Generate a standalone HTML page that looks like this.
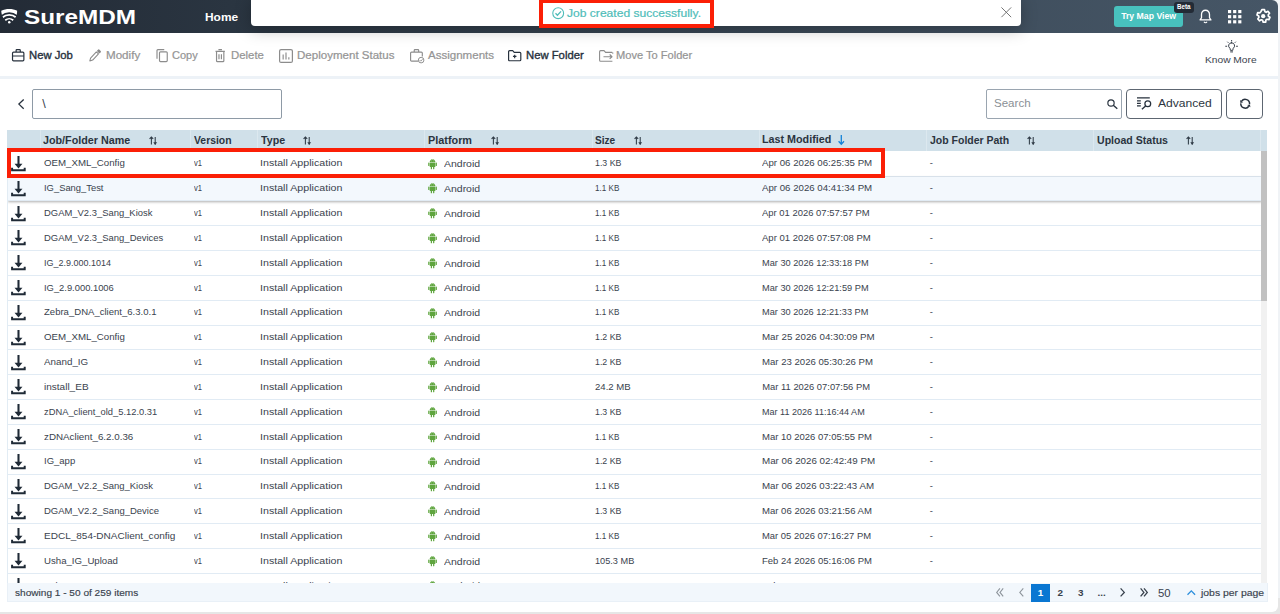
<!DOCTYPE html>
<html lang="en">
<head>
<meta charset="utf-8">
<title>SureMDM - Jobs</title>
<style>
*{box-sizing:border-box;margin:0;padding:0}
html,body{width:1280px;height:614px;overflow:hidden}
body{background:#e6e6e6;font-family:"Liberation Sans",sans-serif;color:#39424d;position:relative}
.strip{position:absolute;left:1270px;top:0;width:10px;height:598px;background:#f0f3f6}
.panel{position:absolute;left:0;top:0;width:1277.5px;height:612.4px;background:#fff;border-radius:0 6px 6px 0;overflow:hidden}
svg{position:absolute;overflow:visible}
.abs{position:absolute;white-space:nowrap;transform-origin:0 50%}

/* header */
.hdr{position:absolute;left:0;top:0;width:1277.5px;height:32.8px;background:linear-gradient(90deg,#232b36 0%,#2a3541 18%,#34414e 45%,#3f4e5d 75%,#465666 100%)}
.brand{left:24px;top:3.6px;font-size:21px;font-weight:700;color:#fff;line-height:26px}
.home{left:205.5px;top:10.8px;font-size:10px;font-weight:700;color:#fff;line-height:14px}
.toast{position:absolute;left:251px;top:-4px;width:769.5px;height:30.2px;background:#fff;border-radius:4px;box-shadow:0 4px 16px rgba(0,0,0,.25)}
.toasttxt{left:567px;top:6.5px;font-size:10.4px;color:#4fbdb9;line-height:14px;-webkit-text-stroke:.2px #4fbdb9}
.redbox{position:absolute;border:4px solid #fb1f06}
.trymap{position:absolute;left:1114.2px;top:5.6px;width:68.8px;height:21px;border-radius:3px;background:#48c1be;color:#fff;font-size:8.7px;font-weight:700;line-height:21px;text-align:center}
.beta{position:absolute;left:1173.5px;top:2.2px;width:20.5px;height:10.4px;border-radius:3px;background:#232b36;color:#fff;font-size:6.3px;font-weight:700;line-height:10.4px;text-align:center}

/* toolbar */
.tb{top:48.4px;font-size:10.7px;line-height:14px;color:#959595;-webkit-text-stroke:.22px #959595}
.tb.on{color:#27313d;font-weight:400;-webkit-text-stroke:.35px #27313d}
.sepband{position:absolute;left:0;top:76px;width:1277.5px;height:3px;background:#edf2f7}
.know{left:1205.5px;top:53.8px;font-size:9.1px;line-height:13px;color:#3b444e}

/* filter row */
.pathbox{position:absolute;left:31.7px;top:89px;width:250px;height:29.6px;border:1px solid #8e9aa6;border-radius:2px;background:#fff}
.pathtxt{left:42.3px;top:96.8px;font-size:12.6px;line-height:15px;color:#39424d}
.search{position:absolute;left:986.3px;top:89px;width:135.7px;height:29.6px;border:1px solid #9aa5b0;border-radius:2px;background:#fff}
.searchtxt{left:994.3px;top:97.4px;font-size:10.3px;line-height:14px;color:#8a8f95}
.btn{position:absolute;top:89px;height:29.6px;border:1px solid #5d6671;border-radius:4px;background:#fff}
.advtxt{left:1157.5px;top:96.9px;font-size:10px;line-height:14px;color:#2d3641}

/* table */
.th{position:absolute;left:7px;top:130px;width:1260.3px;height:21.2px;background:#d0e0e9}
.thsep{position:absolute;top:130px;width:1px;height:21.2px;background:#dce8ef}
.h{top:133.7px;font-size:10px;font-weight:700;line-height:14px;color:#2b343f}
.sort{width:8.6px;height:9.6px;top:136.4px}
.tbody{position:absolute;left:6.5px;top:151.2px;width:1254.5px;height:432px;overflow:hidden;border-left:1px solid #e2ecf4;background:#fff}
.r{position:absolute;left:0;width:1254px;height:24.8px;border-bottom:1px solid #e1ebf4;background:#fff}
.r.hov{background:#f3f8fd;box-shadow:0 1px 2.5px rgba(0,0,0,.32);z-index:2}
.c{position:absolute;top:4.7px;font-size:9.4px;line-height:13px;color:#3a434e;white-space:nowrap;transform-origin:0 50%}
.c1{left:36.3px}.c2{left:186.2px}.c3{left:252.9px}.c4{left:436.4px;top:5.5px}.c5{left:587px}.c6{left:754.8px}.c7{left:922.3px}
.dl{left:3.8px;top:4.2px;width:14.8px;height:15.2px}
.and{left:420.6px;top:6.8px;width:9.1px;height:10.5px}
.sb{position:absolute;left:1261px;top:151.2px;width:6.3px;height:432px;background:#f1f1f1}
.sbt{position:absolute;left:1261px;top:151.2px;width:6.3px;height:150px;background:#c1c1c1}

/* footer */
.ft{position:absolute;left:6.5px;top:583.2px;width:1261px;height:18.6px;background:#f2f7fc;border:1px solid #e9f0f7;border-top:none}
.fttxt{left:14.6px;top:586px;font-size:9.9px;line-height:13px;color:#39424d;-webkit-text-stroke:.15px #39424d}
.pg{top:586px;font-size:9.9px;line-height:13px;color:#39424d;font-weight:700}
.pgcur{position:absolute;left:1031px;top:583.6px;width:18.8px;height:18px;background:#0a77d2;color:#fff;font-size:9.9px;font-weight:700;line-height:18px;text-align:center}
</style>
</head>
<body>
<div class="strip"></div>
<div class="panel">

<!-- ===== header ===== -->
<div class="hdr"></div>
<svg style="left:1px;top:7.8px;width:16.5px;height:16px" viewBox="0 0 33 32">
  <defs><clipPath id="shc"><path d="M0.500 5.500C10 0.500 23 0.500 32.500 5.500C32 17 27 27 16.500 32C6 27 1 17 0.500 5.500Z"/></clipPath></defs>
  <g clip-path="url(#shc)" fill="none" stroke="#fff">
    <path d="M-2 10.500C8 2 25 2 35 10.500" stroke-width="9"/>
    <path d="M3.500 18.500C10.500 12 22.500 12 29.500 18.500" stroke-width="3.600"/>
    <path d="M8.500 24.500C13 20.500 20 20.500 24.500 24.500" stroke-width="3.400"/>
  </g>
  <circle cx="16.500" cy="28.300" r="2.500" fill="#fff"/>
</svg>
<span class="abs brand" style="transform:scaleX(1.157);left:23.6px">SureMDM</span>
<span class="abs home" style="transform:scaleX(1.194);left:205.3px">Home</span>

<div class="toast"></div>
<svg style="left:551.6px;top:7px;width:12.4px;height:12.4px" viewBox="0 0 24 24" fill="none" stroke="#4fbdb9" stroke-width="2.100"><circle cx="12" cy="12" r="10.500"/><path d="M6.800 12.300l3.700 3.600 7-7.400" stroke-width="2.600"/></svg>
<span class="abs toasttxt" style="transform:scaleX(1.162);left:566.9px">Job created successfully.</span>
<svg style="left:1000.5px;top:6.6px;width:10.6px;height:10.6px" viewBox="0 0 10 10" stroke="#6e6e6e" stroke-width=".9" fill="none"><path d="M0.400 .4l9.200 9.200M9.600 .4L.4 9.600"/></svg>
<div class="redbox" style="left:539px;top:-1px;width:175px;height:29.2px"></div>

<div class="trymap">Try Map View</div>
<div class="beta">Beta</div>
<!-- bell -->
<svg style="left:1198.5px;top:9px;width:13px;height:14.5px" viewBox="0 0 26 29" fill="none" stroke="#fff" stroke-width="2.600" stroke-linejoin="round"><path d="M13 2.500c-5 0-8 3.800-8 8.500v6.500l-2.800 4.300h21.600L21 17.500V11c0-4.700-3-8.500-8-8.500z"/><path d="M10 25.500c.7 1.300 1.700 2 3 2s2.300-.7 3-2" stroke-width="2.400"/></svg>
<!-- grid -->
<svg style="left:1227.6px;top:9.5px;width:13.4px;height:13.4px" viewBox="0 0 27 27" fill="#fff"><rect x="0" y="0" width="6.400" height="6.400"/><rect x="10.300" y="0" width="6.400" height="6.400"/><rect x="20.600" y="0" width="6.400" height="6.400"/><rect x="0" y="10.300" width="6.400" height="6.400"/><rect x="10.300" y="10.300" width="6.400" height="6.400"/><rect x="20.600" y="10.300" width="6.400" height="6.400"/><rect x="0" y="20.600" width="6.400" height="6.400"/><rect x="10.300" y="20.600" width="6.400" height="6.400"/><rect x="20.600" y="20.600" width="6.400" height="6.400"/></svg>
<!-- gear -->
<svg style="left:1255.2px;top:8.2px;width:16.4px;height:16.4px" viewBox="0 0 24 24" fill="none" stroke="#fff" stroke-width="2.500" stroke-linejoin="round"><path d="M10.100 2.500h3.800l.6 2.900 1.900.9 2.600-1.500 2.300 2.900-1.900 2.200.2 2.100 2.300 1.600-1.500 3.400-2.900-.5-1.600 1.300-.2 3h-3.700l-.9-2.800-1.900-.8-2.500 1.600-2.600-2.700 1.700-2.400-.4-2-2.500-1.400 1.100-3.600 3 .3 1.500-1.500z"/><circle cx="12" cy="12" r="3.100" fill="#fff" stroke="none"/></svg>

<!-- ===== toolbar ===== -->
<!-- briefcase -->
<svg style="left:11.8px;top:49.3px;width:12.4px;height:12.4px" viewBox="0 0 24 24" fill="none" stroke="#27313d" stroke-width="2.300" stroke-linejoin="round"><rect x="1" y="6" width="22" height="17" rx="2"/><path d="M8 6V2.600c0-.8.500-1.300 1.300-1.300h5.400c.8 0 1.300.5 1.300 1.300V6M1 13.500h22"/></svg>
<span class="abs tb on" style="transform:scaleX(1.055);left:28.8px">New Job</span>
<!-- pencil -->
<svg style="left:88px;top:48px;width:14px;height:15px" viewBox="0 0 14 15"><g transform="translate(1.700 13.100) rotate(-46.500)"><path d="M0.200 0L2.800-1.450H11.200V1.450H2.800Z" fill="none" stroke="#8a8a8a" stroke-width="1.050" stroke-linejoin="round"/><rect x="12.200" y="-1.900" width="2.700" height="3.800" rx=".9" fill="#8a8a8a"/></g></svg>
<span class="abs tb" style="transform:scaleX(1.086);left:105.6px">Modify</span>
<!-- copy -->
<svg style="left:156px;top:48.8px;width:12px;height:13.2px" viewBox="0 0 24 26" fill="none" stroke="#8c8c8c" stroke-width="2.32" stroke-linejoin="round"><rect x="7" y="5.500" width="15.500" height="19.500" rx="2"/><path d="M2 19.500V3c0-1.100.700-1.800 1.800-1.800H16.500"/></svg>
<span class="abs tb" style="transform:scaleX(1.030);left:172.4px">Copy</span>
<!-- trash -->
<svg style="left:214.5px;top:48.8px;width:10.4px;height:13.2px" viewBox="0 0 20 26" fill="none" stroke="#8c8c8c" stroke-width="2.32"><path d="M6.500 1.200h7M0.800 4.800h18.400M2.800 5v18c0 1.200.7 1.900 1.900 1.900h10.600c1.200 0 1.900-.7 1.900-1.900V5M7.600 10.500v9.500M12.400 10.500v9.500"/></svg>
<span class="abs tb" style="transform:scaleX(1.065);left:231.1px">Delete</span>
<!-- deployment status -->
<svg style="left:278.800px;top:48.5px;width:14px;height:14px" viewBox="0 0 28 28" fill="none" stroke="#8c8c8c" stroke-width="2.44"><rect x="1.200" y="1.200" width="25.600" height="25.600" rx="3"/><path d="M8.300 11v9.800M14 6.800v14M19.700 16.500v4.300" stroke-width="2.300"/></svg>
<span class="abs tb" style="transform:scaleX(1.080);left:296.9px">Deployment Status</span>
<!-- assignments -->
<svg style="left:409.5px;top:48.6px;width:14.4px;height:14.4px" viewBox="0 0 29 29" fill="none" stroke="#8c8c8c" stroke-width="2.32" stroke-linejoin="round"><path d="M17 24.500H3.200c-1.200 0-2-.8-2-2V8.200c0-1.200.8-2 2-2h19.600c1.200 0 2 .8 2 2V15"/><path d="M8.500 6V2.800c0-.9.600-1.500 1.500-1.500h6c.9 0 1.500.6 1.500 1.500V6"/><circle cx="22.400" cy="22.400" r="5.600" stroke-width="1.95" fill="#fff"/><path d="M19.600 22.500l2 2 3.600-3.800" stroke-width="1.95"/></svg>
<span class="abs tb" style="transform:scaleX(1.079);left:427.5px">Assignments</span>
<!-- new folder -->
<svg style="left:508px;top:50px;width:13.4px;height:11.6px" viewBox="0 0 27 23" fill="none" stroke="#27313d" stroke-width="2.400" stroke-linejoin="round"><path d="M1.200 19.500V3.200c0-1.200.8-2 2-2h6.300l3 3.300h11.300c1.200 0 2 .8 2 2v13c0 1.200-.8 2-2 2H3.200c-1.200 0-2-.8-2-2z"/><path d="M13.500 9.300v7M10 12.800h7" stroke-width="2.300"/></svg>
<span class="abs tb on" style="transform:scaleX(1.056);left:525.7px">New Folder</span>
<!-- move to folder -->
<svg style="left:598.500px;top:49.600px;width:14.400px;height:12px" viewBox="0 0 29 24" fill="none" stroke="#8c8c8c" stroke-width="2.20" stroke-linejoin="round"><path d="M27 22.500H3.200c-1.200 0-2-.8-2-2V3.200c0-1.200.8-2 2-2h7l3 3.500h13.500M27.700 4.700v3"/><path d="M9 13.500h17M21.500 9l4.700 4.500-4.700 4.500"/></svg>
<span class="abs tb" style="transform:scaleX(1.037);left:616.1px">Move To Folder</span>

<!-- know more -->
<svg style="left:1224.800px;top:40px;width:13.200px;height:13px" viewBox="0 0 26 26" fill="none" stroke="#2d3641" stroke-width="1.900" stroke-linecap="round"><path d="M13 5.500a6 6 0 0 0-3.300 11l1 4.200h4.600l1-4.200A6 6 0 0 0 13 5.500z" stroke-linejoin="round"/><path d="M11 23.800h4M13 .8v1.400M5 4l1 1M21 4l-1 1M1.200 12.500h2M22.800 12.500h2"/></svg>
<span class="abs know" style="transform:scaleX(1.122);left:1205.1px">Know More</span>
<div class="sepband"></div>

<!-- ===== filter row ===== -->
<svg style="left:18.400px;top:99.200px;width:6.200px;height:10.200px" viewBox="0 0 6.200 10.200" fill="none" stroke="#27313d" stroke-width="1.300"><path d="M5.700 .5L.9 5.100l4.800 4.600"/></svg>
<div class="pathbox"></div>
<span class="abs pathtxt">\</span>
<div class="search"></div>
<span class="abs searchtxt" style="transform:scaleX(1.121);left:993.9px">Search</span>
<svg style="left:1106.600px;top:98.500px;width:11px;height:10.200px" viewBox="0 0 22 20.400" fill="none" stroke="#27313d" stroke-width="2.300"><circle cx="8" cy="8" r="6.300"/><path d="M12.600 12.600l8 7" stroke-width="2.700"/></svg>
<div class="btn" style="left:1126px;width:96px"></div>
<svg style="left:1137.200px;top:97px;width:14.200px;height:12.400px" viewBox="0 0 14.200 12.400" fill="none" stroke="#27313d" stroke-width="1.250"><path d="M0 .8h12.800M0 4h3.800M0 6.500h3.800M0 9h3.800"/><circle cx="10.800" cy="6.700" r="2.900"/><path d="M8.600 9L4.900 12.200" stroke-width="1.400"/></svg>
<span class="abs advtxt" style="transform:scaleX(1.209);left:1157.7px">Advanced</span>
<div class="btn" style="left:1226px;width:37.400px"></div>
<svg style="left:1239px;top:98.200px;width:12.400px;height:11.400px" viewBox="0 0 12.400 11.400" fill="none" stroke="#27313d" stroke-width="1.500"><path d="M10.580 6.080A4.400 4.400 0 0 0 2.600 3.180M1.820 5.320A4.400 4.400 0 0 0 9.800 8.220"/><path d="M1.500 4.900L1 2.100L4.200 4.300Z" fill="#27313d" stroke="none"/><path d="M10.900 6.500L11.400 9.300L8.200 7.100Z" fill="#27313d" stroke="none"/></svg>

<!-- ===== table header ===== -->
<div class="th"></div>
<div class="thsep" style="left:39.800px"></div><div class="thsep" style="left:190.200px"></div><div class="thsep" style="left:257.200px"></div><div class="thsep" style="left:424.300px"></div><div class="thsep" style="left:591.500px"></div><div class="thsep" style="left:758.500px"></div><div class="thsep" style="left:925.800px"></div><div class="thsep" style="left:1093px"></div><div class="thsep" style="left:1260.200px"></div>
<span class="abs h" style="transform:scaleX(1.075);left:43.4px">Job/Folder Name</span><span style="position:absolute;left:149px;top:0"><svg class="sort" viewBox="0 0 9 10"><path d="M2.5 9V1.200M0.600 3.100L2.500 1.100L4.400 3.100" stroke="#2f3a46" stroke-width="1.100" fill="none"/><path d="M6.500 1v7.800" stroke="#2f3a46" stroke-width="1.100" fill="none"/><path d="M4.500 6.600h4L6.500 9.300z" fill="#2f3a46"/></svg></span>
<span class="abs h" style="transform:scaleX(1.040);left:194.2px">Version</span>
<span class="abs h" style="transform:scaleX(1.066);left:261px">Type</span><span style="position:absolute;left:303px;top:0"><svg class="sort" viewBox="0 0 9 10"><path d="M2.5 9V1.200M0.600 3.100L2.500 1.100L4.400 3.100" stroke="#2f3a46" stroke-width="1.100" fill="none"/><path d="M6.500 1v7.800" stroke="#2f3a46" stroke-width="1.100" fill="none"/><path d="M4.500 6.600h4L6.500 9.300z" fill="#2f3a46"/></svg></span>
<span class="abs h" style="transform:scaleX(1.085);left:428px">Platform</span><span style="position:absolute;left:490.500px;top:0"><svg class="sort" viewBox="0 0 9 10"><path d="M2.5 9V1.200M0.600 3.100L2.500 1.100L4.400 3.100" stroke="#2f3a46" stroke-width="1.100" fill="none"/><path d="M6.500 1v7.800" stroke="#2f3a46" stroke-width="1.100" fill="none"/><path d="M4.500 6.600h4L6.500 9.300z" fill="#2f3a46"/></svg></span>
<span class="abs h" style="transform:scaleX(1.009);left:595.3px">Size</span><span style="position:absolute;left:633.500px;top:0"><svg class="sort" viewBox="0 0 9 10"><path d="M2.5 9V1.200M0.600 3.100L2.500 1.100L4.400 3.100" stroke="#2f3a46" stroke-width="1.100" fill="none"/><path d="M6.500 1v7.800" stroke="#2f3a46" stroke-width="1.100" fill="none"/><path d="M4.500 6.600h4L6.500 9.300z" fill="#2f3a46"/></svg></span>
<span class="abs h" style="transform:scaleX(1.075);left:762.3px;top:133.200px">Last Modified</span>
<svg style="left:837.500px;top:134.500px;width:6.600px;height:10.200px" viewBox="0 0 6.600 10.200" fill="none" stroke="#1583d8" stroke-width="1.300"><path d="M3.300 0v9M.6 6.300l2.700 2.900 2.700-2.900"/></svg>
<span class="abs h" style="transform:scaleX(1.049);left:929.6px">Job Folder Path</span><span style="position:absolute;left:1027.300px;top:0"><svg class="sort" viewBox="0 0 9 10"><path d="M2.5 9V1.200M0.600 3.100L2.500 1.100L4.400 3.100" stroke="#2f3a46" stroke-width="1.100" fill="none"/><path d="M6.500 1v7.800" stroke="#2f3a46" stroke-width="1.100" fill="none"/><path d="M4.500 6.600h4L6.500 9.300z" fill="#2f3a46"/></svg></span>
<span class="abs h" style="transform:scaleX(1.056);left:1096.7px">Upload Status</span><span style="position:absolute;left:1186px;top:0"><svg class="sort" viewBox="0 0 9 10"><path d="M2.5 9V1.200M0.600 3.100L2.500 1.100L4.400 3.100" stroke="#2f3a46" stroke-width="1.100" fill="none"/><path d="M6.500 1v7.800" stroke="#2f3a46" stroke-width="1.100" fill="none"/><path d="M4.500 6.600h4L6.500 9.300z" fill="#2f3a46"/></svg></span>

<!-- ===== table body ===== -->
<div class="tbody">
<div class="r" style="top:0.60px"><svg class="dl" viewBox="0 0 14.8 15.4"><path d="M7.5 0V9.500" stroke="#1f2a36" stroke-width="2.100" fill="none"/><path d="M3.500 7.900H11.500L7.500 12.600Z" fill="#1f2a36"/><path d="M1 11.800V14.400H13.800V11.800" stroke="#1f2a36" stroke-width="2" fill="none"/></svg><span class="c c1" style="transform:scaleX(1.034)">OEM_XML_Config</span><span class="c c2" style="transform:scaleX(0.808)">v1</span><span class="c c3" style="transform:scaleX(1.137)">Install Application</span><svg class="and" viewBox="0 0 19 22"><g fill="#5fa53e"><path d="M3.6 7.2h11.8v8.400c0 .7-.5 1.200-1.200 1.200h-1v3.400a1.300 1.300 0 0 1-2.600 0v-3.400H8.400v3.400a1.300 1.300 0 0 1-2.600 0v-3.400h-1c-.7 0-1.200-.5-1.200-1.200z"/><rect x="0.4" y="7.2" width="2.6" height="7.6" rx="1.3"/><rect x="16" y="7.2" width="2.6" height="7.6" rx="1.3"/><path d="M3.600 6.400c0-2.400 1.400-4.100 3.300-4.900L5.900 0.100l.5-.3 1.100 1.500c.6-.2 1.300-.3 2-.3s1.400.1 2 .3L12.600-.2l.5.3-1 1.400c1.900.8 3.300 2.500 3.300 4.900z"/></g><circle cx="6.900" cy="4" r=".6" fill="#fff"/><circle cx="12.100" cy="4" r=".6" fill="#fff"/></svg><span class="c c4" style="transform:scaleX(1.117)">Android</span><span class="c c5" style="transform:scaleX(0.938)">1.3 KB</span><span class="c c6" style="transform:scaleX(1.031)">Apr 06 2026 06:25:35 PM</span><span class="c c7">-</span></div>
<div class="r hov" style="top:25.43px"><svg class="dl" viewBox="0 0 14.8 15.4"><path d="M7.5 0V9.500" stroke="#1f2a36" stroke-width="2.100" fill="none"/><path d="M3.500 7.900H11.500L7.500 12.600Z" fill="#1f2a36"/><path d="M1 11.800V14.400H13.800V11.800" stroke="#1f2a36" stroke-width="2" fill="none"/></svg><span class="c c1" style="transform:scaleX(1.001)">IG_Sang_Test</span><span class="c c2" style="transform:scaleX(0.808)">v1</span><span class="c c3" style="transform:scaleX(1.137)">Install Application</span><svg class="and" viewBox="0 0 19 22"><g fill="#5fa53e"><path d="M3.6 7.2h11.8v8.400c0 .7-.5 1.200-1.200 1.200h-1v3.400a1.300 1.300 0 0 1-2.600 0v-3.400H8.400v3.400a1.300 1.300 0 0 1-2.600 0v-3.400h-1c-.7 0-1.200-.5-1.200-1.200z"/><rect x="0.4" y="7.2" width="2.6" height="7.6" rx="1.3"/><rect x="16" y="7.2" width="2.6" height="7.6" rx="1.3"/><path d="M3.600 6.400c0-2.400 1.400-4.100 3.300-4.900L5.900 0.100l.5-.3 1.100 1.500c.6-.2 1.300-.3 2-.3s1.400.1 2 .3L12.600-.2l.5.3-1 1.400c1.900.8 3.300 2.500 3.300 4.900z"/></g><circle cx="6.900" cy="4" r=".6" fill="#fff"/><circle cx="12.100" cy="4" r=".6" fill="#fff"/></svg><span class="c c4" style="transform:scaleX(1.117)">Android</span><span class="c c5" style="transform:scaleX(0.863)">1.1 KB</span><span class="c c6" style="transform:scaleX(1.031)">Apr 06 2026 04:41:34 PM</span><span class="c c7">-</span></div>
<div class="r" style="top:50.26px"><svg class="dl" viewBox="0 0 14.8 15.4"><path d="M7.5 0V9.500" stroke="#1f2a36" stroke-width="2.100" fill="none"/><path d="M3.500 7.900H11.500L7.500 12.600Z" fill="#1f2a36"/><path d="M1 11.800V14.400H13.800V11.800" stroke="#1f2a36" stroke-width="2" fill="none"/></svg><span class="c c1" style="transform:scaleX(1.005)">DGAM_V2.3_Sang_Kiosk</span><span class="c c2" style="transform:scaleX(0.808)">v1</span><span class="c c3" style="transform:scaleX(1.137)">Install Application</span><svg class="and" viewBox="0 0 19 22"><g fill="#5fa53e"><path d="M3.6 7.2h11.8v8.400c0 .7-.5 1.200-1.200 1.200h-1v3.400a1.300 1.300 0 0 1-2.600 0v-3.400H8.400v3.400a1.300 1.300 0 0 1-2.600 0v-3.400h-1c-.7 0-1.200-.5-1.200-1.200z"/><rect x="0.4" y="7.2" width="2.6" height="7.6" rx="1.3"/><rect x="16" y="7.2" width="2.6" height="7.6" rx="1.3"/><path d="M3.600 6.400c0-2.400 1.400-4.100 3.300-4.900L5.900 0.100l.5-.3 1.100 1.500c.6-.2 1.300-.3 2-.3s1.400.1 2 .3L12.600-.2l.5.3-1 1.400c1.900.8 3.300 2.500 3.300 4.900z"/></g><circle cx="6.900" cy="4" r=".6" fill="#fff"/><circle cx="12.100" cy="4" r=".6" fill="#fff"/></svg><span class="c c4" style="transform:scaleX(1.117)">Android</span><span class="c c5" style="transform:scaleX(0.863)">1.1 KB</span><span class="c c6" style="transform:scaleX(1.008)">Apr 01 2026 07:57:57 PM</span><span class="c c7">-</span></div>
<div class="r" style="top:75.09px"><svg class="dl" viewBox="0 0 14.8 15.4"><path d="M7.5 0V9.500" stroke="#1f2a36" stroke-width="2.100" fill="none"/><path d="M3.500 7.900H11.500L7.500 12.600Z" fill="#1f2a36"/><path d="M1 11.800V14.400H13.800V11.800" stroke="#1f2a36" stroke-width="2" fill="none"/></svg><span class="c c1" style="transform:scaleX(1.008)">DGAM_V2.3_Sang_Devices</span><span class="c c2" style="transform:scaleX(0.808)">v1</span><span class="c c3" style="transform:scaleX(1.137)">Install Application</span><svg class="and" viewBox="0 0 19 22"><g fill="#5fa53e"><path d="M3.6 7.2h11.8v8.400c0 .7-.5 1.200-1.200 1.200h-1v3.400a1.300 1.300 0 0 1-2.600 0v-3.400H8.400v3.400a1.300 1.300 0 0 1-2.600 0v-3.400h-1c-.7 0-1.200-.5-1.200-1.200z"/><rect x="0.4" y="7.2" width="2.6" height="7.6" rx="1.3"/><rect x="16" y="7.2" width="2.6" height="7.6" rx="1.3"/><path d="M3.600 6.400c0-2.400 1.400-4.100 3.300-4.900L5.900 0.100l.5-.3 1.100 1.500c.6-.2 1.300-.3 2-.3s1.400.1 2 .3L12.600-.2l.5.3-1 1.400c1.900.8 3.300 2.500 3.300 4.900z"/></g><circle cx="6.900" cy="4" r=".6" fill="#fff"/><circle cx="12.100" cy="4" r=".6" fill="#fff"/></svg><span class="c c4" style="transform:scaleX(1.117)">Android</span><span class="c c5" style="transform:scaleX(0.863)">1.1 KB</span><span class="c c6" style="transform:scaleX(1.018)">Apr 01 2026 07:57:08 PM</span><span class="c c7">-</span></div>
<div class="r" style="top:99.92px"><svg class="dl" viewBox="0 0 14.8 15.4"><path d="M7.5 0V9.500" stroke="#1f2a36" stroke-width="2.100" fill="none"/><path d="M3.500 7.900H11.500L7.500 12.600Z" fill="#1f2a36"/><path d="M1 11.800V14.400H13.800V11.800" stroke="#1f2a36" stroke-width="2" fill="none"/></svg><span class="c c1" style="transform:scaleX(0.958)">IG_2.9.000.1014</span><span class="c c2" style="transform:scaleX(0.808)">v1</span><span class="c c3" style="transform:scaleX(1.137)">Install Application</span><svg class="and" viewBox="0 0 19 22"><g fill="#5fa53e"><path d="M3.6 7.2h11.8v8.400c0 .7-.5 1.200-1.200 1.200h-1v3.400a1.300 1.300 0 0 1-2.600 0v-3.400H8.400v3.400a1.300 1.300 0 0 1-2.600 0v-3.400h-1c-.7 0-1.200-.5-1.200-1.200z"/><rect x="0.4" y="7.2" width="2.6" height="7.6" rx="1.3"/><rect x="16" y="7.2" width="2.6" height="7.6" rx="1.3"/><path d="M3.600 6.400c0-2.400 1.400-4.100 3.300-4.900L5.900 0.100l.5-.3 1.100 1.500c.6-.2 1.300-.3 2-.3s1.400.1 2 .3L12.600-.2l.5.3-1 1.400c1.900.8 3.300 2.500 3.300 4.900z"/></g><circle cx="6.900" cy="4" r=".6" fill="#fff"/><circle cx="12.100" cy="4" r=".6" fill="#fff"/></svg><span class="c c4" style="transform:scaleX(1.117)">Android</span><span class="c c5" style="transform:scaleX(0.863)">1.1 KB</span><span class="c c6" style="transform:scaleX(0.983)">Mar 30 2026 12:33:18 PM</span><span class="c c7">-</span></div>
<div class="r" style="top:124.75px"><svg class="dl" viewBox="0 0 14.8 15.4"><path d="M7.5 0V9.500" stroke="#1f2a36" stroke-width="2.100" fill="none"/><path d="M3.500 7.900H11.500L7.500 12.600Z" fill="#1f2a36"/><path d="M1 11.800V14.400H13.800V11.800" stroke="#1f2a36" stroke-width="2" fill="none"/></svg><span class="c c1" style="transform:scaleX(0.999)">IG_2.9.000.1006</span><span class="c c2" style="transform:scaleX(0.808)">v1</span><span class="c c3" style="transform:scaleX(1.137)">Install Application</span><svg class="and" viewBox="0 0 19 22"><g fill="#5fa53e"><path d="M3.6 7.2h11.8v8.400c0 .7-.5 1.200-1.200 1.200h-1v3.400a1.300 1.300 0 0 1-2.600 0v-3.400H8.400v3.400a1.300 1.300 0 0 1-2.600 0v-3.400h-1c-.7 0-1.200-.5-1.200-1.200z"/><rect x="0.4" y="7.2" width="2.6" height="7.6" rx="1.3"/><rect x="16" y="7.2" width="2.6" height="7.6" rx="1.3"/><path d="M3.600 6.400c0-2.400 1.400-4.100 3.300-4.900L5.900 0.100l.5-.3 1.100 1.500c.6-.2 1.300-.3 2-.3s1.400.1 2 .3L12.600-.2l.5.3-1 1.400c1.900.8 3.300 2.500 3.300 4.900z"/></g><circle cx="6.900" cy="4" r=".6" fill="#fff"/><circle cx="12.100" cy="4" r=".6" fill="#fff"/></svg><span class="c c4" style="transform:scaleX(1.117)">Android</span><span class="c c5" style="transform:scaleX(0.863)">1.1 KB</span><span class="c c6" style="transform:scaleX(0.983)">Mar 30 2026 12:21:59 PM</span><span class="c c7">-</span></div>
<div class="r" style="top:149.58px"><svg class="dl" viewBox="0 0 14.8 15.4"><path d="M7.5 0V9.500" stroke="#1f2a36" stroke-width="2.100" fill="none"/><path d="M3.500 7.900H11.500L7.500 12.600Z" fill="#1f2a36"/><path d="M1 11.800V14.400H13.800V11.800" stroke="#1f2a36" stroke-width="2" fill="none"/></svg><span class="c c1" style="transform:scaleX(1.018)">Zebra_DNA_client_6.3.0.1</span><span class="c c2" style="transform:scaleX(0.808)">v1</span><span class="c c3" style="transform:scaleX(1.137)">Install Application</span><svg class="and" viewBox="0 0 19 22"><g fill="#5fa53e"><path d="M3.6 7.2h11.8v8.400c0 .7-.5 1.200-1.200 1.200h-1v3.400a1.300 1.300 0 0 1-2.600 0v-3.400H8.400v3.400a1.300 1.300 0 0 1-2.600 0v-3.400h-1c-.7 0-1.200-.5-1.200-1.200z"/><rect x="0.4" y="7.2" width="2.6" height="7.6" rx="1.3"/><rect x="16" y="7.2" width="2.6" height="7.6" rx="1.3"/><path d="M3.600 6.400c0-2.400 1.400-4.100 3.300-4.900L5.900 0.100l.5-.3 1.100 1.500c.6-.2 1.300-.3 2-.3s1.400.1 2 .3L12.600-.2l.5.3-1 1.400c1.900.8 3.300 2.500 3.300 4.900z"/></g><circle cx="6.900" cy="4" r=".6" fill="#fff"/><circle cx="12.100" cy="4" r=".6" fill="#fff"/></svg><span class="c c4" style="transform:scaleX(1.117)">Android</span><span class="c c5" style="transform:scaleX(0.863)">1.1 KB</span><span class="c c6" style="transform:scaleX(0.981)">Mar 30 2026 12:21:33 PM</span><span class="c c7">-</span></div>
<div class="r" style="top:174.41px"><svg class="dl" viewBox="0 0 14.8 15.4"><path d="M7.5 0V9.500" stroke="#1f2a36" stroke-width="2.100" fill="none"/><path d="M3.500 7.900H11.500L7.500 12.600Z" fill="#1f2a36"/><path d="M1 11.800V14.400H13.800V11.800" stroke="#1f2a36" stroke-width="2" fill="none"/></svg><span class="c c1" style="transform:scaleX(1.034)">OEM_XML_Config</span><span class="c c2" style="transform:scaleX(0.808)">v1</span><span class="c c3" style="transform:scaleX(1.137)">Install Application</span><svg class="and" viewBox="0 0 19 22"><g fill="#5fa53e"><path d="M3.6 7.2h11.8v8.400c0 .7-.5 1.200-1.200 1.200h-1v3.400a1.300 1.300 0 0 1-2.600 0v-3.400H8.400v3.400a1.300 1.300 0 0 1-2.600 0v-3.400h-1c-.7 0-1.200-.5-1.200-1.200z"/><rect x="0.4" y="7.2" width="2.6" height="7.6" rx="1.3"/><rect x="16" y="7.2" width="2.6" height="7.6" rx="1.3"/><path d="M3.600 6.400c0-2.400 1.400-4.100 3.300-4.900L5.900 0.100l.5-.3 1.100 1.500c.6-.2 1.300-.3 2-.3s1.400.1 2 .3L12.600-.2l.5.3-1 1.400c1.900.8 3.300 2.500 3.300 4.900z"/></g><circle cx="6.900" cy="4" r=".6" fill="#fff"/><circle cx="12.100" cy="4" r=".6" fill="#fff"/></svg><span class="c c4" style="transform:scaleX(1.117)">Android</span><span class="c c5" style="transform:scaleX(0.938)">1.2 KB</span><span class="c c6" style="transform:scaleX(1.040)">Mar 25 2026 04:30:09 PM</span><span class="c c7">-</span></div>
<div class="r" style="top:199.24px"><svg class="dl" viewBox="0 0 14.8 15.4"><path d="M7.5 0V9.500" stroke="#1f2a36" stroke-width="2.100" fill="none"/><path d="M3.500 7.900H11.500L7.500 12.600Z" fill="#1f2a36"/><path d="M1 11.800V14.400H13.800V11.800" stroke="#1f2a36" stroke-width="2" fill="none"/></svg><span class="c c1" style="transform:scaleX(1.047)">Anand_IG</span><span class="c c2" style="transform:scaleX(0.808)">v1</span><span class="c c3" style="transform:scaleX(1.137)">Install Application</span><svg class="and" viewBox="0 0 19 22"><g fill="#5fa53e"><path d="M3.6 7.2h11.8v8.400c0 .7-.5 1.200-1.200 1.200h-1v3.400a1.300 1.300 0 0 1-2.600 0v-3.400H8.400v3.400a1.300 1.300 0 0 1-2.600 0v-3.400h-1c-.7 0-1.200-.5-1.200-1.200z"/><rect x="0.4" y="7.2" width="2.6" height="7.6" rx="1.3"/><rect x="16" y="7.2" width="2.6" height="7.6" rx="1.3"/><path d="M3.600 6.400c0-2.400 1.400-4.100 3.300-4.900L5.900 0.100l.5-.3 1.100 1.500c.6-.2 1.300-.3 2-.3s1.400.1 2 .3L12.600-.2l.5.3-1 1.400c1.900.8 3.300 2.500 3.300 4.900z"/></g><circle cx="6.900" cy="4" r=".6" fill="#fff"/><circle cx="12.100" cy="4" r=".6" fill="#fff"/></svg><span class="c c4" style="transform:scaleX(1.117)">Android</span><span class="c c5" style="transform:scaleX(0.938)">1.2 KB</span><span class="c c6" style="transform:scaleX(1.023)">Mar 23 2026 05:30:26 PM</span><span class="c c7">-</span></div>
<div class="r" style="top:224.07px"><svg class="dl" viewBox="0 0 14.8 15.4"><path d="M7.5 0V9.500" stroke="#1f2a36" stroke-width="2.100" fill="none"/><path d="M3.500 7.900H11.500L7.500 12.600Z" fill="#1f2a36"/><path d="M1 11.800V14.400H13.800V11.800" stroke="#1f2a36" stroke-width="2" fill="none"/></svg><span class="c c1" style="transform:scaleX(1.069)">install_EB</span><span class="c c2" style="transform:scaleX(0.808)">v1</span><span class="c c3" style="transform:scaleX(1.137)">Install Application</span><svg class="and" viewBox="0 0 19 22"><g fill="#5fa53e"><path d="M3.6 7.2h11.8v8.400c0 .7-.5 1.200-1.200 1.200h-1v3.400a1.300 1.300 0 0 1-2.600 0v-3.400H8.400v3.400a1.300 1.300 0 0 1-2.600 0v-3.400h-1c-.7 0-1.200-.5-1.200-1.200z"/><rect x="0.4" y="7.2" width="2.6" height="7.6" rx="1.3"/><rect x="16" y="7.2" width="2.6" height="7.6" rx="1.3"/><path d="M3.600 6.400c0-2.400 1.400-4.100 3.300-4.900L5.900 0.100l.5-.3 1.100 1.500c.6-.2 1.300-.3 2-.3s1.400.1 2 .3L12.600-.2l.5.3-1 1.400c1.900.8 3.300 2.500 3.300 4.900z"/></g><circle cx="6.900" cy="4" r=".6" fill="#fff"/><circle cx="12.100" cy="4" r=".6" fill="#fff"/></svg><span class="c c4" style="transform:scaleX(1.117)">Android</span><span class="c c5" style="transform:scaleX(1.022)">24.2 MB</span><span class="c c6" style="transform:scaleX(1.000)">Mar 11 2026 07:07:56 PM</span><span class="c c7">-</span></div>
<div class="r" style="top:248.90px"><svg class="dl" viewBox="0 0 14.8 15.4"><path d="M7.5 0V9.500" stroke="#1f2a36" stroke-width="2.100" fill="none"/><path d="M3.500 7.900H11.500L7.500 12.600Z" fill="#1f2a36"/><path d="M1 11.800V14.400H13.800V11.800" stroke="#1f2a36" stroke-width="2" fill="none"/></svg><span class="c c1" style="transform:scaleX(0.996)">zDNA_client_old_5.12.0.31</span><span class="c c2" style="transform:scaleX(0.808)">v1</span><span class="c c3" style="transform:scaleX(1.137)">Install Application</span><svg class="and" viewBox="0 0 19 22"><g fill="#5fa53e"><path d="M3.6 7.2h11.8v8.400c0 .7-.5 1.200-1.200 1.200h-1v3.400a1.300 1.300 0 0 1-2.600 0v-3.400H8.400v3.400a1.300 1.300 0 0 1-2.600 0v-3.400h-1c-.7 0-1.200-.5-1.200-1.200z"/><rect x="0.4" y="7.2" width="2.6" height="7.6" rx="1.3"/><rect x="16" y="7.2" width="2.6" height="7.6" rx="1.3"/><path d="M3.600 6.400c0-2.400 1.400-4.100 3.300-4.900L5.900 0.100l.5-.3 1.100 1.500c.6-.2 1.300-.3 2-.3s1.400.1 2 .3L12.600-.2l.5.3-1 1.400c1.900.8 3.300 2.500 3.300 4.900z"/></g><circle cx="6.900" cy="4" r=".6" fill="#fff"/><circle cx="12.100" cy="4" r=".6" fill="#fff"/></svg><span class="c c4" style="transform:scaleX(1.117)">Android</span><span class="c c5" style="transform:scaleX(0.938)">1.3 KB</span><span class="c c6" style="transform:scaleX(0.964)">Mar 11 2026 11:16:44 AM</span><span class="c c7">-</span></div>
<div class="r" style="top:273.73px"><svg class="dl" viewBox="0 0 14.8 15.4"><path d="M7.5 0V9.500" stroke="#1f2a36" stroke-width="2.100" fill="none"/><path d="M3.500 7.900H11.500L7.500 12.600Z" fill="#1f2a36"/><path d="M1 11.800V14.400H13.800V11.800" stroke="#1f2a36" stroke-width="2" fill="none"/></svg><span class="c c1" style="transform:scaleX(1.045)">zDNAclient_6.2.0.36</span><span class="c c2" style="transform:scaleX(0.808)">v1</span><span class="c c3" style="transform:scaleX(1.137)">Install Application</span><svg class="and" viewBox="0 0 19 22"><g fill="#5fa53e"><path d="M3.6 7.2h11.8v8.400c0 .7-.5 1.200-1.200 1.200h-1v3.400a1.300 1.300 0 0 1-2.600 0v-3.400H8.400v3.400a1.300 1.300 0 0 1-2.600 0v-3.400h-1c-.7 0-1.200-.5-1.200-1.200z"/><rect x="0.4" y="7.2" width="2.6" height="7.6" rx="1.3"/><rect x="16" y="7.2" width="2.6" height="7.6" rx="1.3"/><path d="M3.600 6.400c0-2.400 1.400-4.100 3.300-4.900L5.900 0.100l.5-.3 1.100 1.500c.6-.2 1.300-.3 2-.3s1.400.1 2 .3L12.600-.2l.5.3-1 1.400c1.900.8 3.300 2.500 3.300 4.900z"/></g><circle cx="6.900" cy="4" r=".6" fill="#fff"/><circle cx="12.100" cy="4" r=".6" fill="#fff"/></svg><span class="c c4" style="transform:scaleX(1.117)">Android</span><span class="c c5" style="transform:scaleX(0.863)">1.1 KB</span><span class="c c6" style="transform:scaleX(1.014)">Mar 10 2026 07:05:55 PM</span><span class="c c7">-</span></div>
<div class="r" style="top:298.56px"><svg class="dl" viewBox="0 0 14.8 15.4"><path d="M7.5 0V9.500" stroke="#1f2a36" stroke-width="2.100" fill="none"/><path d="M3.500 7.900H11.500L7.500 12.600Z" fill="#1f2a36"/><path d="M1 11.800V14.400H13.800V11.800" stroke="#1f2a36" stroke-width="2" fill="none"/></svg><span class="c c1" style="transform:scaleX(1.014)">IG_app</span><span class="c c2" style="transform:scaleX(0.808)">v1</span><span class="c c3" style="transform:scaleX(1.137)">Install Application</span><svg class="and" viewBox="0 0 19 22"><g fill="#5fa53e"><path d="M3.6 7.2h11.8v8.400c0 .7-.5 1.200-1.200 1.200h-1v3.400a1.300 1.300 0 0 1-2.600 0v-3.400H8.400v3.400a1.300 1.300 0 0 1-2.600 0v-3.400h-1c-.7 0-1.200-.5-1.200-1.200z"/><rect x="0.4" y="7.2" width="2.6" height="7.6" rx="1.3"/><rect x="16" y="7.2" width="2.6" height="7.6" rx="1.3"/><path d="M3.600 6.400c0-2.400 1.400-4.100 3.300-4.900L5.900 0.100l.5-.3 1.100 1.500c.6-.2 1.300-.3 2-.3s1.400.1 2 .3L12.600-.2l.5.3-1 1.400c1.900.8 3.300 2.500 3.300 4.900z"/></g><circle cx="6.900" cy="4" r=".6" fill="#fff"/><circle cx="12.100" cy="4" r=".6" fill="#fff"/></svg><span class="c c4" style="transform:scaleX(1.117)">Android</span><span class="c c5" style="transform:scaleX(0.938)">1.2 KB</span><span class="c c6" style="transform:scaleX(1.043)">Mar 06 2026 02:42:49 PM</span><span class="c c7">-</span></div>
<div class="r" style="top:323.39px"><svg class="dl" viewBox="0 0 14.8 15.4"><path d="M7.5 0V9.500" stroke="#1f2a36" stroke-width="2.100" fill="none"/><path d="M3.500 7.900H11.500L7.500 12.600Z" fill="#1f2a36"/><path d="M1 11.800V14.400H13.800V11.800" stroke="#1f2a36" stroke-width="2" fill="none"/></svg><span class="c c1" style="transform:scaleX(1.010)">DGAM_V2.2_Sang_Kiosk</span><span class="c c2" style="transform:scaleX(0.808)">v1</span><span class="c c3" style="transform:scaleX(1.137)">Install Application</span><svg class="and" viewBox="0 0 19 22"><g fill="#5fa53e"><path d="M3.6 7.2h11.8v8.400c0 .7-.5 1.200-1.200 1.200h-1v3.400a1.300 1.300 0 0 1-2.600 0v-3.400H8.400v3.400a1.300 1.300 0 0 1-2.600 0v-3.400h-1c-.7 0-1.200-.5-1.200-1.200z"/><rect x="0.4" y="7.2" width="2.6" height="7.6" rx="1.3"/><rect x="16" y="7.2" width="2.6" height="7.6" rx="1.3"/><path d="M3.600 6.400c0-2.400 1.400-4.100 3.300-4.900L5.900 0.100l.5-.3 1.100 1.500c.6-.2 1.300-.3 2-.3s1.400.1 2 .3L12.600-.2l.5.3-1 1.400c1.900.8 3.300 2.500 3.300 4.900z"/></g><circle cx="6.900" cy="4" r=".6" fill="#fff"/><circle cx="12.100" cy="4" r=".6" fill="#fff"/></svg><span class="c c4" style="transform:scaleX(1.117)">Android</span><span class="c c5" style="transform:scaleX(0.863)">1.1 KB</span><span class="c c6" style="transform:scaleX(1.038)">Mar 06 2026 03:22:43 AM</span><span class="c c7">-</span></div>
<div class="r" style="top:348.22px"><svg class="dl" viewBox="0 0 14.8 15.4"><path d="M7.5 0V9.500" stroke="#1f2a36" stroke-width="2.100" fill="none"/><path d="M3.500 7.900H11.500L7.500 12.600Z" fill="#1f2a36"/><path d="M1 11.800V14.400H13.800V11.800" stroke="#1f2a36" stroke-width="2" fill="none"/></svg><span class="c c1" style="transform:scaleX(1.012)">DGAM_V2.2_Sang_Device</span><span class="c c2" style="transform:scaleX(0.808)">v1</span><span class="c c3" style="transform:scaleX(1.137)">Install Application</span><svg class="and" viewBox="0 0 19 22"><g fill="#5fa53e"><path d="M3.6 7.2h11.8v8.400c0 .7-.5 1.200-1.200 1.200h-1v3.400a1.300 1.300 0 0 1-2.600 0v-3.400H8.400v3.400a1.300 1.300 0 0 1-2.600 0v-3.400h-1c-.7 0-1.200-.5-1.200-1.200z"/><rect x="0.4" y="7.2" width="2.6" height="7.6" rx="1.3"/><rect x="16" y="7.2" width="2.6" height="7.6" rx="1.3"/><path d="M3.600 6.400c0-2.400 1.400-4.100 3.300-4.900L5.900 0.100l.5-.3 1.100 1.500c.6-.2 1.300-.3 2-.3s1.400.1 2 .3L12.600-.2l.5.3-1 1.400c1.900.8 3.300 2.500 3.300 4.900z"/></g><circle cx="6.900" cy="4" r=".6" fill="#fff"/><circle cx="12.100" cy="4" r=".6" fill="#fff"/></svg><span class="c c4" style="transform:scaleX(1.117)">Android</span><span class="c c5" style="transform:scaleX(0.938)">1.3 KB</span><span class="c c6" style="transform:scaleX(1.019)">Mar 06 2026 03:21:56 AM</span><span class="c c7">-</span></div>
<div class="r" style="top:373.05px"><svg class="dl" viewBox="0 0 14.8 15.4"><path d="M7.5 0V9.500" stroke="#1f2a36" stroke-width="2.100" fill="none"/><path d="M3.500 7.900H11.500L7.500 12.600Z" fill="#1f2a36"/><path d="M1 11.800V14.400H13.800V11.800" stroke="#1f2a36" stroke-width="2" fill="none"/></svg><span class="c c1" style="transform:scaleX(1.068)">EDCL_854-DNAClient_config</span><span class="c c2" style="transform:scaleX(0.808)">v1</span><span class="c c3" style="transform:scaleX(1.137)">Install Application</span><svg class="and" viewBox="0 0 19 22"><g fill="#5fa53e"><path d="M3.6 7.2h11.8v8.400c0 .7-.5 1.200-1.200 1.200h-1v3.400a1.300 1.300 0 0 1-2.600 0v-3.400H8.400v3.400a1.300 1.300 0 0 1-2.600 0v-3.400h-1c-.7 0-1.200-.5-1.200-1.200z"/><rect x="0.4" y="7.2" width="2.6" height="7.6" rx="1.3"/><rect x="16" y="7.2" width="2.6" height="7.6" rx="1.3"/><path d="M3.600 6.400c0-2.400 1.400-4.100 3.300-4.900L5.900 0.100l.5-.3 1.100 1.500c.6-.2 1.300-.3 2-.3s1.400.1 2 .3L12.600-.2l.5.3-1 1.400c1.900.8 3.300 2.500 3.300 4.900z"/></g><circle cx="6.900" cy="4" r=".6" fill="#fff"/><circle cx="12.100" cy="4" r=".6" fill="#fff"/></svg><span class="c c4" style="transform:scaleX(1.117)">Android</span><span class="c c5" style="transform:scaleX(0.863)">1.1 KB</span><span class="c c6" style="transform:scaleX(1.006)">Mar 05 2026 07:16:27 PM</span><span class="c c7">-</span></div>
<div class="r" style="top:397.88px"><svg class="dl" viewBox="0 0 14.8 15.4"><path d="M7.5 0V9.500" stroke="#1f2a36" stroke-width="2.100" fill="none"/><path d="M3.500 7.900H11.500L7.500 12.600Z" fill="#1f2a36"/><path d="M1 11.800V14.400H13.800V11.800" stroke="#1f2a36" stroke-width="2" fill="none"/></svg><span class="c c1" style="transform:scaleX(1.028)">Usha_IG_Upload</span><span class="c c2" style="transform:scaleX(0.808)">v1</span><span class="c c3" style="transform:scaleX(1.137)">Install Application</span><svg class="and" viewBox="0 0 19 22"><g fill="#5fa53e"><path d="M3.6 7.2h11.8v8.400c0 .7-.5 1.200-1.200 1.200h-1v3.400a1.300 1.300 0 0 1-2.600 0v-3.400H8.400v3.400a1.300 1.300 0 0 1-2.600 0v-3.400h-1c-.7 0-1.200-.5-1.200-1.200z"/><rect x="0.4" y="7.2" width="2.6" height="7.6" rx="1.3"/><rect x="16" y="7.2" width="2.6" height="7.6" rx="1.3"/><path d="M3.600 6.400c0-2.400 1.400-4.100 3.300-4.900L5.900 0.100l.5-.3 1.100 1.500c.6-.2 1.300-.3 2-.3s1.400.1 2 .3L12.600-.2l.5.3-1 1.400c1.900.8 3.300 2.500 3.300 4.900z"/></g><circle cx="6.900" cy="4" r=".6" fill="#fff"/><circle cx="12.100" cy="4" r=".6" fill="#fff"/></svg><span class="c c4" style="transform:scaleX(1.117)">Android</span><span class="c c5" style="transform:scaleX(0.979)">105.3 MB</span><span class="c c6" style="transform:scaleX(1.014)">Feb 24 2026 05:16:06 PM</span><span class="c c7">-</span></div>
<div class="r" style="top:422.71px"><svg class="dl" viewBox="0 0 14.8 15.4"><path d="M7.5 0V9.500" stroke="#1f2a36" stroke-width="2.100" fill="none"/><path d="M3.500 7.900H11.500L7.500 12.600Z" fill="#1f2a36"/><path d="M1 11.800V14.400H13.800V11.800" stroke="#1f2a36" stroke-width="2" fill="none"/></svg><span class="c c1" style="transform:scaleX(0.993)">Usha_EB W</span><span class="c c2" style="transform:scaleX(0.808)">v1</span><span class="c c3" style="transform:scaleX(1.137)">Install Application</span><svg class="and" viewBox="0 0 19 22"><g fill="#5fa53e"><path d="M3.6 7.2h11.8v8.400c0 .7-.5 1.200-1.200 1.200h-1v3.400a1.300 1.300 0 0 1-2.600 0v-3.400H8.400v3.400a1.300 1.300 0 0 1-2.600 0v-3.400h-1c-.7 0-1.200-.5-1.200-1.200z"/><rect x="0.4" y="7.2" width="2.6" height="7.6" rx="1.3"/><rect x="16" y="7.2" width="2.6" height="7.6" rx="1.3"/><path d="M3.600 6.400c0-2.400 1.400-4.100 3.300-4.900L5.900 0.100l.5-.3 1.100 1.500c.6-.2 1.300-.3 2-.3s1.400.1 2 .3L12.600-.2l.5.3-1 1.400c1.900.8 3.300 2.500 3.300 4.900z"/></g><circle cx="6.900" cy="4" r=".6" fill="#fff"/><circle cx="12.100" cy="4" r=".6" fill="#fff"/></svg><span class="c c4" style="transform:scaleX(1.117)">Android</span><span class="c c5" style="transform:scaleX(0.938)">1.3 KB</span><span class="c c6" style="transform:scaleX(1.039)">Feb 24 2026 05:08:45 PM</span><span class="c c7">-</span></div>
</div>
<div class="sb"></div><div class="sbt"></div>
<div class="redbox" style="left:7px;top:148px;width:878px;height:30px;z-index:5"></div>

<!-- ===== footer ===== -->
<div class="ft"></div>
<span class="abs fttxt" style="transform:scaleX(1.021);left:14.6px">showing 1 - 50 of 259 items</span>
<svg style="left:996px;top:588.300px;width:7.600px;height:8.800px" viewBox="0 0 7.600 8.800" fill="none" stroke="#8e959c" stroke-width="1.100"><path d="M3.900 .4L.7 4.400l3.200 4M7.200 .4L4 4.400l3.200 4"/></svg>
<svg style="left:1018.500px;top:588.300px;width:4.800px;height:8.800px" viewBox="0 0 4.800 8.800" fill="none" stroke="#8e959c" stroke-width="1.100"><path d="M4.300 .4L.8 4.400l3.500 4"/></svg>
<div class="pgcur">1</div>
<span class="abs pg" style="left:1057.500px">2</span>
<span class="abs pg" style="left:1078px">3</span>
<span class="abs pg" style="left:1097.500px">...</span>
<svg style="left:1119.500px;top:588.300px;width:5.200px;height:8.800px" viewBox="0 0 5.200 8.800" fill="none" stroke="#39424d" stroke-width="1.300"><path d="M.6 .4l3.700 4-3.700 4"/></svg>
<svg style="left:1139.500px;top:588.300px;width:8px;height:8.800px" viewBox="0 0 8 8.800" fill="none" stroke="#39424d" stroke-width="1.300"><path d="M.6 .4l3.300 4-3.300 4M4 .4l3.300 4-3.300 4"/></svg>
<span class="abs pg" style="left:1158px;top:586.7px;font-weight:400;font-size:10.600px;transform:scaleX(1.07)">50</span>
<svg style="left:1186.600px;top:589.800px;width:8.600px;height:5.200px" viewBox="0 0 8.600 5.200" fill="none" stroke="#2d8fdc" stroke-width="1.300"><path d="M.5 4.800L4.300 .9l3.800 3.900"/></svg>
<span class="abs fttxt" style="transform:scaleX(1.053);left:1200.6px">jobs per page</span>

</div>
</body>
</html>
